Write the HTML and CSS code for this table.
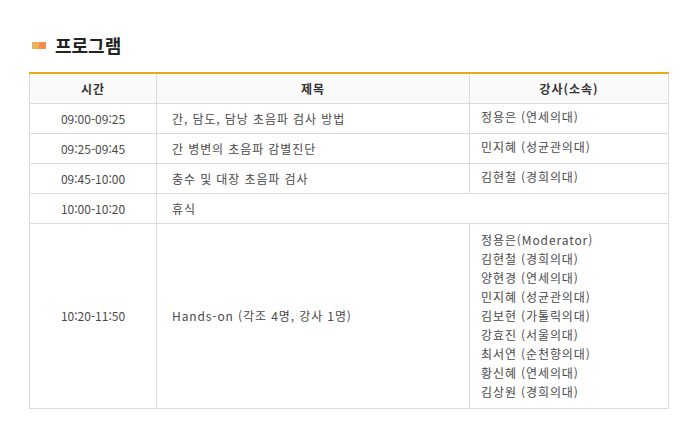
FILE: index.html
```html
<!DOCTYPE html>
<html lang="ko">
<head>
<meta charset="utf-8">
<link rel="stylesheet" href="styles.css">
</head>
<body>
<div class="page">
  <h2 class="title"><span class="mark"><i class="m1"></i><i class="m2"></i></span>프로그램</h2>
  <table class="prog">
    <colgroup><col class="c1"><col class="c2"><col class="c3"></colgroup>
    <thead>
      <tr><th>시간</th><th>제목</th><th>강사(소속)</th></tr>
    </thead>
    <tbody>
      <tr><td class="time">09:00-09:25</td><td class="subj">간, 담도, 담낭 초음파 검사 방법</td><td class="spk">정용은 (연세의대)</td></tr>
      <tr><td class="time">09:25-09:45</td><td class="subj">간 병변의 초음파 감별진단</td><td class="spk">민지혜 (성균관의대)</td></tr>
      <tr><td class="time">09:45-10:00</td><td class="subj">충수 및 대장 초음파 검사</td><td class="spk">김현철 (경희의대)</td></tr>
      <tr><td class="time">10:00-10:20</td><td class="subj" colspan="2">휴식</td></tr>
      <tr class="big"><td class="time">10:20-11:50</td><td class="subj">Hands-on (각조 4명, 강사 1명)</td><td class="spk list">정용은(Moderator)<br>김현철 (경희의대)<br>양현경 (연세의대)<br>민지혜 (성균관의대)<br>김보현 (가톨릭의대)<br>강효진 (서울의대)<br>최서연 (순천향의대)<br>황신혜 (연세의대)<br>김상원 (경희의대)</td></tr>
    </tbody>
  </table>
</div>
</body>
</html>
```

FILE: styles.css
```css
html, body {
  margin: 0;
  padding: 0;
  background: #fff;
}
body {
  font-family: "Noto Sans CJK KR", "Noto Sans", sans-serif;
  color: #4a4a4a;
}
.page {
  padding: 32px 31px 0 29px;
}
.title {
  display: flex;
  align-items: center;
  margin: 0 0 14px 3px;
  font-size: 18px;
  font-weight: 700;
  color: #222;
  line-height: 26px;
  height: 26px;
}
.mark {
  display: flex;
  width: 14px;
  height: 7px;
  margin-right: 9px;
}
.mark i { flex: 1; }
.m1 { background: #e8b25a; }
.m2 { background: #fb8a4c; }
.prog {
  width: 639px;
  border-collapse: collapse;
  table-layout: fixed;
  border-top: 2px solid #e9ad13;
  font-size: 12px;
}
.c1 { width: 127px; }
.c2 { width: 313px; }
.c3 { width: 199px; }
.prog th, .prog td {
  border: 1px solid #dcdcdc;
  height: 30px;
  padding: 0;
  vertical-align: middle;
  box-sizing: border-box;
}
.prog tr:first-child th { border-top: 0; }
.prog th {
  background: #fafafa;
  color: #333;
  font-weight: 700;
  text-align: center;
  letter-spacing: 1px;
}
.time {
  text-align: center;
}
.subj {
  padding-left: 15px !important;
  letter-spacing: 0.9px;
}
.spk {
  padding: 0 0 3px 11px !important;
  letter-spacing: 0.9px;
}
.spk.list {
  padding: 6px 0 7px 11px !important;
  line-height: 19px;
}
```
